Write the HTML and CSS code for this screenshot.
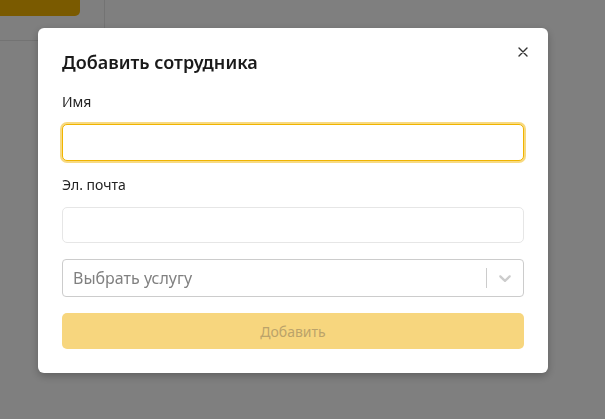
FILE: index.html
```html
<!DOCTYPE html>
<html lang="ru">
<head>
<meta charset="utf-8">
<title>Добавить сотрудника</title>
<link rel="stylesheet" href="styles.css">
</head>
<body>
<div class="page">
  <div class="card">
    <div class="card-btn"></div>
  </div>
</div>
<div class="overlay"></div>
<div class="modal">
  <div class="modal-head">
    <h2 class="modal-title">Добавить сотрудника</h2>
    <button class="close" aria-label="Закрыть">
      <svg width="10" height="10" viewBox="0 0 10 10"><path d="M1 1L9 9M9 1L1 9" stroke="#333" stroke-width="1.4" stroke-linecap="round"/></svg>
    </button>
  </div>
  <label class="label">Имя</label>
  <div class="input input-focus"></div>
  <label class="label label-2">Эл. почта</label>
  <div class="input input-2"></div>
  <div class="select">
    <span class="placeholder">Выбрать услугу</span>
    <span class="sep"></span>
    <span class="indicator">
      <svg width="20" height="20" viewBox="0 0 20 20"><path fill="#ccc" d="M4.516 7.548c0.436-0.446 1.043-0.481 1.576 0l3.908 3.747 3.908-3.747c0.533-0.481 1.141-0.446 1.574 0 0.436 0.445 0.408 1.197 0 1.615-0.406 0.418-4.695 4.502-4.695 4.502-0.217 0.223-0.502 0.335-0.787 0.335s-0.57-0.112-0.789-0.335c0 0-4.287-4.084-4.695-4.502s-0.436-1.170 0-1.615z"/></svg>
    </span>
  </div>
  <button class="submit" disabled>Добавить</button>
</div>
</body>
</html>
```
FILE: styles.css
```css
* { box-sizing: border-box; }
html, body { margin: 0; padding: 0; }
body {
  width: 605px;
  height: 419px;
  overflow: hidden;
  background: #fff;
  font-family: "Noto Sans", "Open Sans", sans-serif;
}
.page { height: 419px; }
.card {
  width: 105px;
  height: 41px;
  border-right: 1px solid #e6e6e6;
  border-bottom: 1px solid #e6e6e6;
}
.card-btn {
  width: 80px;
  height: 16px;
  background: #f5b400;
  border-radius: 0 0 5px 0;
}
.overlay {
  position: fixed;
  inset: 0;
  background: rgba(0, 0, 0, 0.5);
}
.modal {
  position: fixed;
  left: 38px;
  top: 28px;
  width: 510px;
  background: #fff;
  border-radius: 6px;
  padding: 22px 24px 24px;
  display: flex;
  flex-direction: column;
  box-shadow: 0 3px 8px rgba(0, 0, 0, 0.25);
}
.modal-head {
  display: flex;
  justify-content: space-between;
  align-items: flex-start;
}
.modal-title {
  margin: 0;
  font-size: 18px;
  line-height: 24px;
  font-weight: 600;
  color: #1a1a1a;
}
.close {
  border: 0;
  background: none;
  padding: 0;
  width: 12px;
  height: 12px;
  margin: -4px -5px 0 0;
  display: flex;
  align-items: center;
  justify-content: center;
}
.label {
  display: block;
  margin-top: 18px;
  font-size: 14px;
  line-height: 20px;
  color: #222;
}
.label-2 { margin-top: 14px; }
.input {
  margin-top: 12px;
  height: 37px;
  border: 1px solid #e6e6e6;
  border-radius: 5px;
  background: #fff;
}
.input-2 { height: 36px; }
.input-focus {
  border-color: #f0b400;
  box-shadow: 0 0 0 2px #f8da82;
}
.select {
  margin-top: 16px;
  height: 38px;
  border: 1px solid #ccc;
  border-radius: 4px;
  display: flex;
  align-items: center;
  padding-left: 10px;
}
.placeholder {
  flex: 1;
  font-size: 16px;
  color: #808080;
}
.sep {
  width: 1px;
  align-self: stretch;
  margin: 8px 0;
  background: #ccc;
}
.indicator {
  display: flex;
  padding: 8px;
}
.submit {
  margin-top: 16px;
  height: 36px;
  border: 0;
  border-radius: 5px;
  background: #f7d67e;
  color: #bba36a;
  font-family: inherit;
  font-size: 14px;
}
```
